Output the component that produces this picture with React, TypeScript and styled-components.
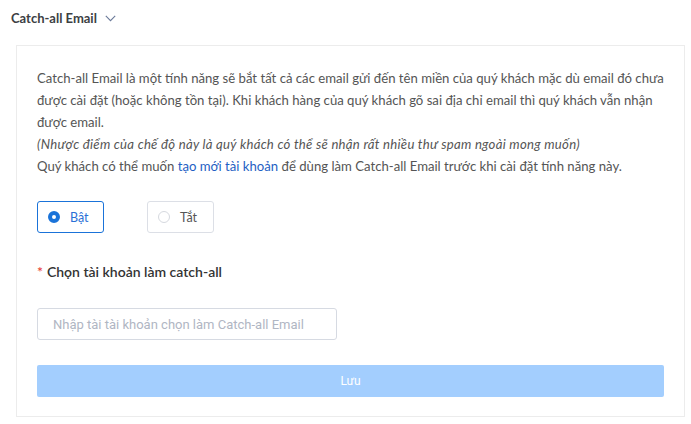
import styled, { createGlobalStyle } from 'styled-components';
import { useState } from 'react';

const GlobalStyle = createGlobalStyle`
  body {
    margin: 0;
    background: #fff;
    font-family: Lato, "Noto Sans", sans-serif;
  }
`;

const Page = styled.div`
  width: 691px;
  min-height: 424px;
  box-sizing: border-box;
  padding: 8px 0 0 0;
`;

const Header = styled.div`
  display: flex;
  align-items: center;
  gap: 8px;
  padding: 0 11px;
  height: 20px;
  font-size: 13px;
  font-weight: 700;
  color: #3c4043;
`;

const Card = styled.div`
  margin: 17px 0 0 16px;
  width: 669px;
  box-sizing: border-box;
  border: 1px solid #ececec;
  padding: 21px 20px 19px;
  display: flex;
  flex-direction: column;
`;

const Intro = styled.div`
  font-size: 13.15px;
  line-height: 22px;
  color: #555;
  & em {
    font-style: italic;
    letter-spacing: 0.27px;
  }
  & a {
    color: #1f5fc4;
    text-decoration: none;
  }
`;

const RadioRow = styled.div`
  display: flex;
  gap: 43px;
  margin-top: 24px;
`;

const RadioBox = styled.label<{ $checked: boolean }>`
  width: 67px;
  height: 32px;
  box-sizing: border-box;
  border: 1px solid ${({ $checked }) => ($checked ? '#1a73d9' : '#dcdfe6')};
  border-radius: 3px;
  display: flex;
  align-items: center;
  padding-left: 10px;
  gap: 10px;
  cursor: pointer;
  font-size: 12.5px;
  color: ${({ $checked }) => ($checked ? '#2a6fd6' : '#555')};
`;

const Dot = styled.span<{ $checked: boolean }>`
  width: 12px;
  height: 12px;
  box-sizing: border-box;
  border-radius: 50%;
  border: ${({ $checked }) => ($checked ? '4px solid #1a73d9' : '1px solid #d6d9df')};
  background: #fff;
`;

const FieldLabel = styled.div`
  margin-top: 29px;
  font-size: 14px;
  line-height: 20px;
  font-weight: 600;
  color: #333;
  & span {
    color: #e8453c;
    margin-right: 4px;
  }
`;

const Input = styled.input`
  margin-top: 26px;
  width: 300px;
  height: 32px;
  box-sizing: border-box;
  border: 1px solid #d6dae2;
  border-radius: 3px;
  padding: 0 15px;
  font-family: Roboto, sans-serif;
  font-size: 13px;
  color: #333;
  outline: none;
  &::placeholder {
    color: #b0b6c3;
  }
`;

const SaveButton = styled.button`
  margin-top: 25px;
  height: 32px;
  width: 100%;
  border: none;
  border-radius: 2px;
  background: #a3cefe;
  color: #fff;
  font-family: Roboto, sans-serif;
  font-size: 12px;
  cursor: not-allowed;
`;

function Chevron() {
  return (
    <svg width="11" height="7" viewBox="0 0 11 7" fill="none">
      <path d="M0.8 0.8 L5.5 5.6 L10.2 0.8" stroke="#6b7a99" strokeWidth="1.1" />
    </svg>
  );
}

export default function App() {
  const [enabled, setEnabled] = useState(true);

  return (
    <Page>
      <GlobalStyle />
      <Header>
        Catch-all Email
        <Chevron />
      </Header>
      <Card>
        <Intro>
          Catch-all Email là một tính năng sẽ bắt tất cả các email gửi đến tên miền của quý khách mặc dù email đó chưa
          được cài đặt (hoặc không tồn tại). Khi khách hàng của quý khách gõ sai địa chỉ email thì quý khách vẫn nhận
          được email.
          <br />
          <em>(Nhược điểm của chế độ này là quý khách có thể sẽ nhận rất nhiều thư spam ngoài mong muốn)</em>
          <br />
          Quý khách có thể muốn <a href="#">tạo mới tài khoản</a> để dùng làm Catch-all Email trước khi cài đặt tính
          năng này.
        </Intro>
        <RadioRow>
          <RadioBox $checked={enabled} onClick={() => setEnabled(true)}>
            <Dot $checked={enabled} />
            Bật
          </RadioBox>
          <RadioBox $checked={!enabled} onClick={() => setEnabled(false)}>
            <Dot $checked={!enabled} />
            Tắt
          </RadioBox>
        </RadioRow>
        <FieldLabel>
          <span>*</span>Chọn tài khoản làm catch-all
        </FieldLabel>
        <Input placeholder="Nhập tài tài khoản chọn làm Catch-all Email" />
        <SaveButton>Lưu</SaveButton>
      </Card>
    </Page>
  );
}
